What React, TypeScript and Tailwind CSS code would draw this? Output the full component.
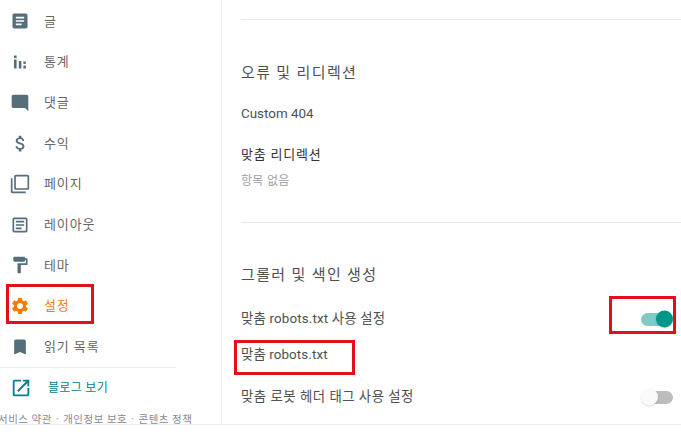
import {
  MdArticle,
  MdModeComment,
  MdAttachMoney,
  MdFilterNone,
  MdOutlineArticle,
  MdFormatPaint,
  MdSettings,
  MdBookmark,
  MdOpenInNew,
} from 'react-icons/md'

const FONT = "font-['Roboto','Noto_Sans_CJK_KR',sans-serif]"

function StatsIcon() {
  return (
    <svg viewBox="0 0 14 14" className="w-[14px] h-[14px] text-[#546e7a]" fill="currentColor">
      <rect x="1" y="0.5" width="2.6" height="2.6" />
      <rect x="1" y="4.5" width="2.6" height="9" />
      <rect x="5.8" y="6" width="2.6" height="7.5" />
      <rect x="10.4" y="6.5" width="2.4" height="2.4" />
      <rect x="10.4" y="10.5" width="2.4" height="3" />
    </svg>
  )
}

const navItems = [
  { label: '글', icon: <MdArticle size={20} /> },
  { label: '통계', icon: <StatsIcon /> },
  { label: '댓글', icon: <MdModeComment size={20} /> },
  { label: '수익', icon: <MdAttachMoney size={21} /> },
  { label: '페이지', icon: <MdFilterNone size={20} /> },
  { label: '레이아웃', icon: <MdOutlineArticle size={20} /> },
  { label: '테마', icon: <MdFormatPaint size={20} /> },
  { label: '설정', icon: <MdSettings size={20} />, active: true },
  { label: '읽기 목록', icon: <MdBookmark size={20} /> },
]

function NavRow({ label, icon, active }: { label: string; icon: React.ReactNode; active?: boolean }) {
  return (
    <div className="h-[40.7px] flex items-center">
      <span className={`w-[40px] flex justify-center ${active ? 'text-[#f57c00]' : 'text-[#546e7a]'}`}>{icon}</span>
      <span className={`ml-[4px] text-[13px] tracking-[0.9px] ${active ? 'text-[#f57c00]' : 'text-[#666666]'}`}>{label}</span>
    </div>
  )
}

function Toggle({ on }: { on?: boolean }) {
  return (
    <div className="relative w-[32px] h-[13px]">
      <div className={`absolute inset-y-0 rounded-full ${on ? 'left-0 right-[2px] bg-[#80cbc4]' : 'left-[2px] right-0 bg-[#bdbdbd]'}`} />
      <div
        className={`absolute top-1/2 -translate-y-1/2 w-[17px] h-[17px] rounded-full shadow ${
          on ? 'right-0 bg-[#009688]' : 'left-0 bg-[#fafafa]'
        }`}
      />
    </div>
  )
}

function RedBox({ className }: { className: string }) {
  return <div className={`absolute border-[3px] border-[#e2101b] pointer-events-none ${className}`} />
}

export default function App() {
  return (
    <div className={`relative w-[681px] h-[434px] bg-white overflow-hidden flex flex-col ${FONT}`}>
      <div className="h-[425px] flex border-b border-[#eeeeee]">
        {/* 사이드바 */}
        <aside className="w-[222px] flex-shrink-0 border-r border-[#f0f0f0] flex flex-col">
          <nav className="pr-[40px] pt-[1px] flex-shrink-0">
            {navItems.map((item) => (
              <NavRow key={item.label} {...item} />
            ))}
          </nav>
          <div className="w-[176px] border-t border-[#eeeeee] flex-shrink-0" />
          <div className="h-[40px] flex items-center flex-shrink-0">
            <span className="w-[42px] flex justify-center text-[#00838f]">
              <MdOpenInNew size={22} />
            </span>
            <span className="ml-[6px] text-[12px] tracking-[0.3px] text-[#00838f]">블로그 보기</span>
          </div>
          <div className="ml-[-2px] mt-[5px] flex-shrink-0 whitespace-nowrap text-[10.5px] leading-[14px] tracking-[0.5px] text-[#8a8a8a]">
            서비스 약관<span className="mx-[4px]">·</span>개인정보 보호<span className="mx-[4px]">·</span>콘텐츠 정책
          </div>
        </aside>

        {/* 본문 */}
        <main className="flex-1 pl-[19px]">
          <div className="h-[20px] border-b border-[#e8e8e8]" />
          <section className="h-[203px] border-b border-[#e8e8e8] flex flex-col">
            <h2 className="mt-[43px] text-[15px] leading-[20px] tracking-[1.35px] text-[#505050] font-normal">오류 및 리디렉션</h2>
            <p className="mt-[21px] text-[13.4px] leading-[20px] text-[#505050]">Custom 404</p>
            <p className="mt-[21px] text-[13px] leading-[20px] tracking-[0.8px] text-[#333333]">맞춤 리디렉션</p>
            <p className="mt-[6px] text-[12px] leading-[20px] tracking-[0.3px] text-[#9e9e9e]">항목 없음</p>
          </section>
          <section className="flex flex-col pr-[8px]">
            <h2 className="mt-[42px] text-[15px] leading-[20px] tracking-[1.35px] text-[#505050] font-normal">그롤러 및 색인 생성</h2>
            <div className="mt-[24px] h-[20px] flex items-center justify-between">
              <span className="text-[13.4px] tracking-[0.15px] text-[#505050]">맞춤 robots.txt 사용 설정</span>
              <Toggle on />
            </div>
            <p className="mt-[16px] text-[13.4px] leading-[20px] tracking-[0.1px] text-[#505050]">맞춤 robots.txt</p>
            <div className="mt-[22px] h-[20px] flex items-center justify-between">
              <span className="text-[13.4px] tracking-[0.5px] text-[#505050]">맞춤 로봇 헤더 태그 사용 설정</span>
              <Toggle />
            </div>
          </section>
        </main>
      </div>

      {/* 강조 표시 */}
      <RedBox className="left-[6px] top-[284px] w-[88px] h-[40px]" />
      <RedBox className="left-[609px] top-[296px] w-[67px] h-[38px]" />
      <RedBox className="left-[234px] top-[340px] w-[121px] h-[35px]" />
    </div>
  )
}
